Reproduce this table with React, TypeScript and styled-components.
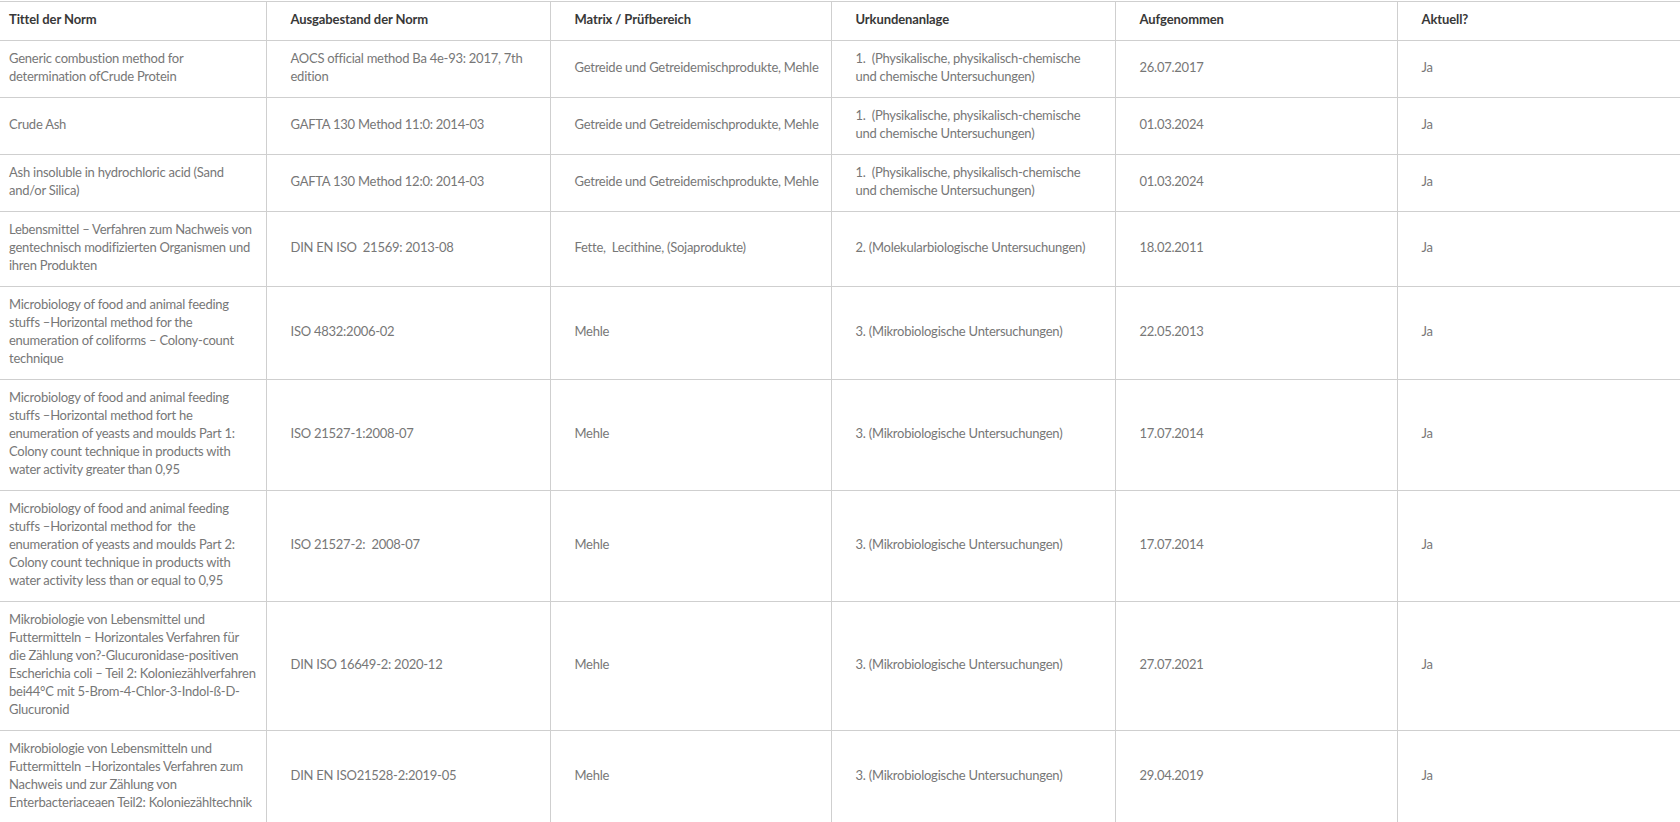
import React from "react";
import styled, { createGlobalStyle } from "styled-components";

const GlobalStyle = createGlobalStyle`
  html, body {
    margin: 0;
    padding: 0;
    background: #ffffff;
    overflow: hidden;
  }
  body {
    font-family: Lato, "Open Sans", Arial, sans-serif;
  }
`;

const Table = styled.table`
  width: 1680px;
  table-layout: fixed;
  border-collapse: collapse;
  border-top: 1px solid #cfcfcf;
  margin-top: 1px;
`;

const Col = styled.col<{ $w: number }>`
  width: ${(p) => p.$w}px;
`;

const HeadCell = styled.th<{ $first?: boolean; $last?: boolean }>`
  text-align: left;
  vertical-align: middle;
  font-size: 13px;
  line-height: 18px;
  font-weight: 700;
  letter-spacing: -0.1px;
  color: #383838;
  padding: 8px 10px 12px ${(p) => (p.$first ? "9px" : "24px")};
  border-bottom: 1px solid #cfcfcf;
  border-right: ${(p) => (p.$last ? "none" : "1px solid #cfcfcf")};
  white-space: nowrap;
`;

const Cell = styled.td<{ $first?: boolean; $last?: boolean }>`
  text-align: left;
  vertical-align: middle;
  font-size: 13px;
  line-height: 18px;
  letter-spacing: -0.25px;
  color: #777777;
  padding: 8px 10px 12px ${(p) => (p.$first ? "9px" : "24px")};
  border-bottom: 1px solid #cfcfcf;
  border-right: ${(p) => (p.$last ? "none" : "1px solid #cfcfcf")};
  white-space: pre;
`;

type Row = {
  title: string[];
  edition: string[];
  matrix: string[];
  annex: string[];
  added: string;
  current: string;
};

const PHYS = ["1.  (Physikalische, physikalisch-chemische", "und chemische Untersuchungen)"];
const MIKRO = ["3. (Mikrobiologische Untersuchungen)"];
const GETREIDE = ["Getreide und Getreidemischprodukte, Mehle"];

const rows: Row[] = [
  {
    title: ["Generic combustion method for", "determination ofCrude Protein"],
    edition: ["AOCS official method Ba 4e-93: 2017, 7th", "edition"],
    matrix: GETREIDE,
    annex: PHYS,
    added: "26.07.2017",
    current: "Ja",
  },
  {
    title: ["Crude Ash"],
    edition: ["GAFTA 130 Method 11:0: 2014-03"],
    matrix: GETREIDE,
    annex: PHYS,
    added: "01.03.2024",
    current: "Ja",
  },
  {
    title: ["Ash insoluble in hydrochloric acid (Sand", "and/or Silica)"],
    edition: ["GAFTA 130 Method 12:0: 2014-03"],
    matrix: GETREIDE,
    annex: PHYS,
    added: "01.03.2024",
    current: "Ja",
  },
  {
    title: [
      "Lebensmittel – Verfahren zum Nachweis von",
      "gentechnisch modifizierten Organismen und",
      "ihren Produkten",
    ],
    edition: ["DIN EN ISO  21569: 2013-08"],
    matrix: ["Fette,  Lecithine, (Sojaprodukte)"],
    annex: ["2. (Molekularbiologische Untersuchungen)"],
    added: "18.02.2011",
    current: "Ja",
  },
  {
    title: [
      "Microbiology of food and animal feeding",
      "stuffs –Horizontal method for the",
      "enumeration of coliforms – Colony-count",
      "technique",
    ],
    edition: ["ISO 4832:2006-02"],
    matrix: ["Mehle"],
    annex: MIKRO,
    added: "22.05.2013",
    current: "Ja",
  },
  {
    title: [
      "Microbiology of food and animal feeding",
      "stuffs –Horizontal method fort he",
      "enumeration of yeasts and moulds Part 1:",
      "Colony count technique in products with",
      "water activity greater than 0,95",
    ],
    edition: ["ISO 21527-1:2008-07"],
    matrix: ["Mehle"],
    annex: MIKRO,
    added: "17.07.2014",
    current: "Ja",
  },
  {
    title: [
      "Microbiology of food and animal feeding",
      "stuffs –Horizontal method for  the",
      "enumeration of yeasts and moulds Part 2:",
      "Colony count technique in products with",
      "water activity less than or equal to 0,95",
    ],
    edition: ["ISO 21527-2:  2008-07"],
    matrix: ["Mehle"],
    annex: MIKRO,
    added: "17.07.2014",
    current: "Ja",
  },
  {
    title: [
      "Mikrobiologie von Lebensmittel und",
      "Futtermitteln – Horizontales Verfahren für",
      "die Zählung von?-Glucuronidase-positiven",
      "Escherichia coli – Teil 2: Koloniezählverfahren",
      "bei44°C mit 5-Brom-4-Chlor-3-Indol-ß-D-",
      "Glucuronid",
    ],
    edition: ["DIN ISO 16649-2: 2020-12"],
    matrix: ["Mehle"],
    annex: MIKRO,
    added: "27.07.2021",
    current: "Ja",
  },
  {
    title: [
      "Mikrobiologie von Lebensmitteln und",
      "Futtermitteln –Horizontales Verfahren zum",
      "Nachweis und zur Zählung von",
      "Enterbacteriaceaen Teil2: Koloniezähltechnik",
    ],
    edition: ["DIN EN ISO21528-2:2019-05"],
    matrix: ["Mehle"],
    annex: MIKRO,
    added: "29.04.2019",
    current: "Ja",
  },
];

const headers = [
  "Tittel der Norm",
  "Ausgabestand der Norm",
  "Matrix / Prüfbereich",
  "Urkundenanlage",
  "Aufgenommen",
  "Aktuell?",
];

const widths = [266, 284, 281, 284, 282, 283];

const Lines = ({ lines }: { lines: string[] }) => (
  <>
    {lines.map((l, i) => (
      <React.Fragment key={i}>
        {i > 0 && <br />}
        {l}
      </React.Fragment>
    ))}
  </>
);

export default function App() {
  return (
    <>
      <GlobalStyle />
      <Table>
        <colgroup>
          {widths.map((w, i) => (
            <Col key={i} $w={w} />
          ))}
        </colgroup>
        <thead>
          <tr>
            {headers.map((h, i) => (
              <HeadCell key={h} $first={i === 0} $last={i === headers.length - 1}>
                {h}
              </HeadCell>
            ))}
          </tr>
        </thead>
        <tbody>
          {rows.map((r, i) => (
            <tr key={i}>
              <Cell $first>
                <Lines lines={r.title} />
              </Cell>
              <Cell>
                <Lines lines={r.edition} />
              </Cell>
              <Cell>
                <Lines lines={r.matrix} />
              </Cell>
              <Cell>
                <Lines lines={r.annex} />
              </Cell>
              <Cell>{r.added}</Cell>
              <Cell $last>{r.current}</Cell>
            </tr>
          ))}
        </tbody>
      </Table>
    </>
  );
}
